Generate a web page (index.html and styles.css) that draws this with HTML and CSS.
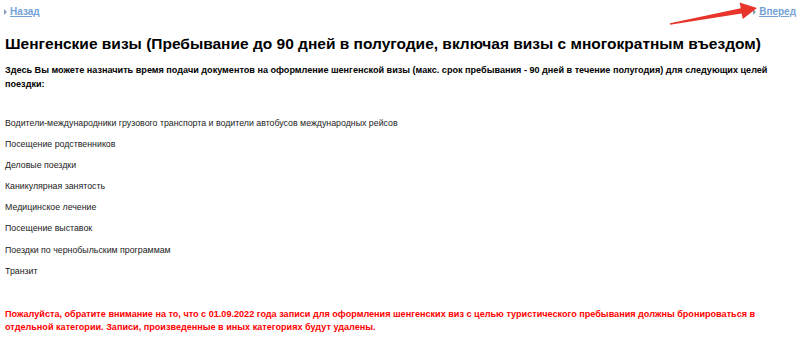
FILE: index.html
```html
<!DOCTYPE html>
<html>
<head>
    <title>Шенгенские визы</title>
    <meta charset="UTF-8">
    <link rel="stylesheet" href="styles.css">
</head>
<body>
    <div class="nav">
        <a class="nav-link" href="#">Назад</a>
        <a class="nav-link" href="#">Вперед</a>
    </div>

    <h1 class="page-title">Шенгенские визы (Пребывание до 90 дней в полугодие, включая визы с многократным въездом)</h1>

    <p class="intro">Здесь Вы можете назначить время подачи документов на оформление шенгенской визы (макс. срок пребывания - 90 дней в течение полугодия) для следующих целей поездки:</p>

    <ul class="purpose-list">
        <li>Водители-международники грузового транспорта и водители автобусов международных рейсов</li>
        <li>Посещение родственников</li>
        <li>Деловые поездки</li>
        <li>Каникулярная занятость</li>
        <li>Медицинское лечение</li>
        <li>Посещение выставок</li>
        <li>Поездки по чернобыльским программам</li>
        <li>Транзит</li>
    </ul>

    <p class="notice">Пожалуйста, обратите внимание на то, что с 01.09.2022 года записи для оформления шенгенских виз с целью туристического пребывания должны бронироваться в отдельной категории. Записи, произведенные в иных категориях будут удалены.</p>

    <!-- стрелка-пометка поверх страницы -->
    <svg class="marker-arrow" width="95" height="30" viewBox="0 0 95 30">
        <polygon points="5,23.3 75.8,8.2 74.6,2.5 92,8 77.8,19 76.6,13.4 5,24.8" fill="#e8352b"/>
    </svg>
</body>
</html>
```

FILE: styles.css
```css
body {
    margin: 0;
    padding: 0 4px;
    font-family: "Liberation Sans", Arial, sans-serif;
    color: #000;
    background: #fff;
}

.nav {
    display: flex;
    justify-content: space-between;
    padding-top: 6px;
    height: 14px;
}

.nav-link {
    font-size: 10px;
    font-weight: bold;
    color: #74a2d6;
    text-decoration: underline;
    padding-left: 6px;
    position: relative;
}

.nav-link::before {
    content: "";
    position: absolute;
    left: 0;
    top: 3px;
    border-left: 3px solid #8aa0b8;
    border-top: 3px solid transparent;
    border-bottom: 3px solid transparent;
}

.page-title {
    font-size: 15.5px;
    font-weight: bold;
    margin: 14px 0 0 1px;
    line-height: 20px;
}

.intro {
    font-size: 9.1px;
    font-weight: bold;
    line-height: 14px;
    margin: 9px 0 0 1px;
}

.purpose-list {
    list-style: none;
    margin: 22px 0 0 1px;
    padding: 0;
}

.purpose-list li {
    font-size: 8.8px;
    line-height: 21.1px;
    color: #222;
}

.notice {
    color: #f00;
    font-size: 9.1px;
    font-weight: bold;
    line-height: 13px;
    margin: 26px 0 0 1px;
}

.marker-arrow {
    position: absolute;
    left: 665px;
    top: 0;
}
```
